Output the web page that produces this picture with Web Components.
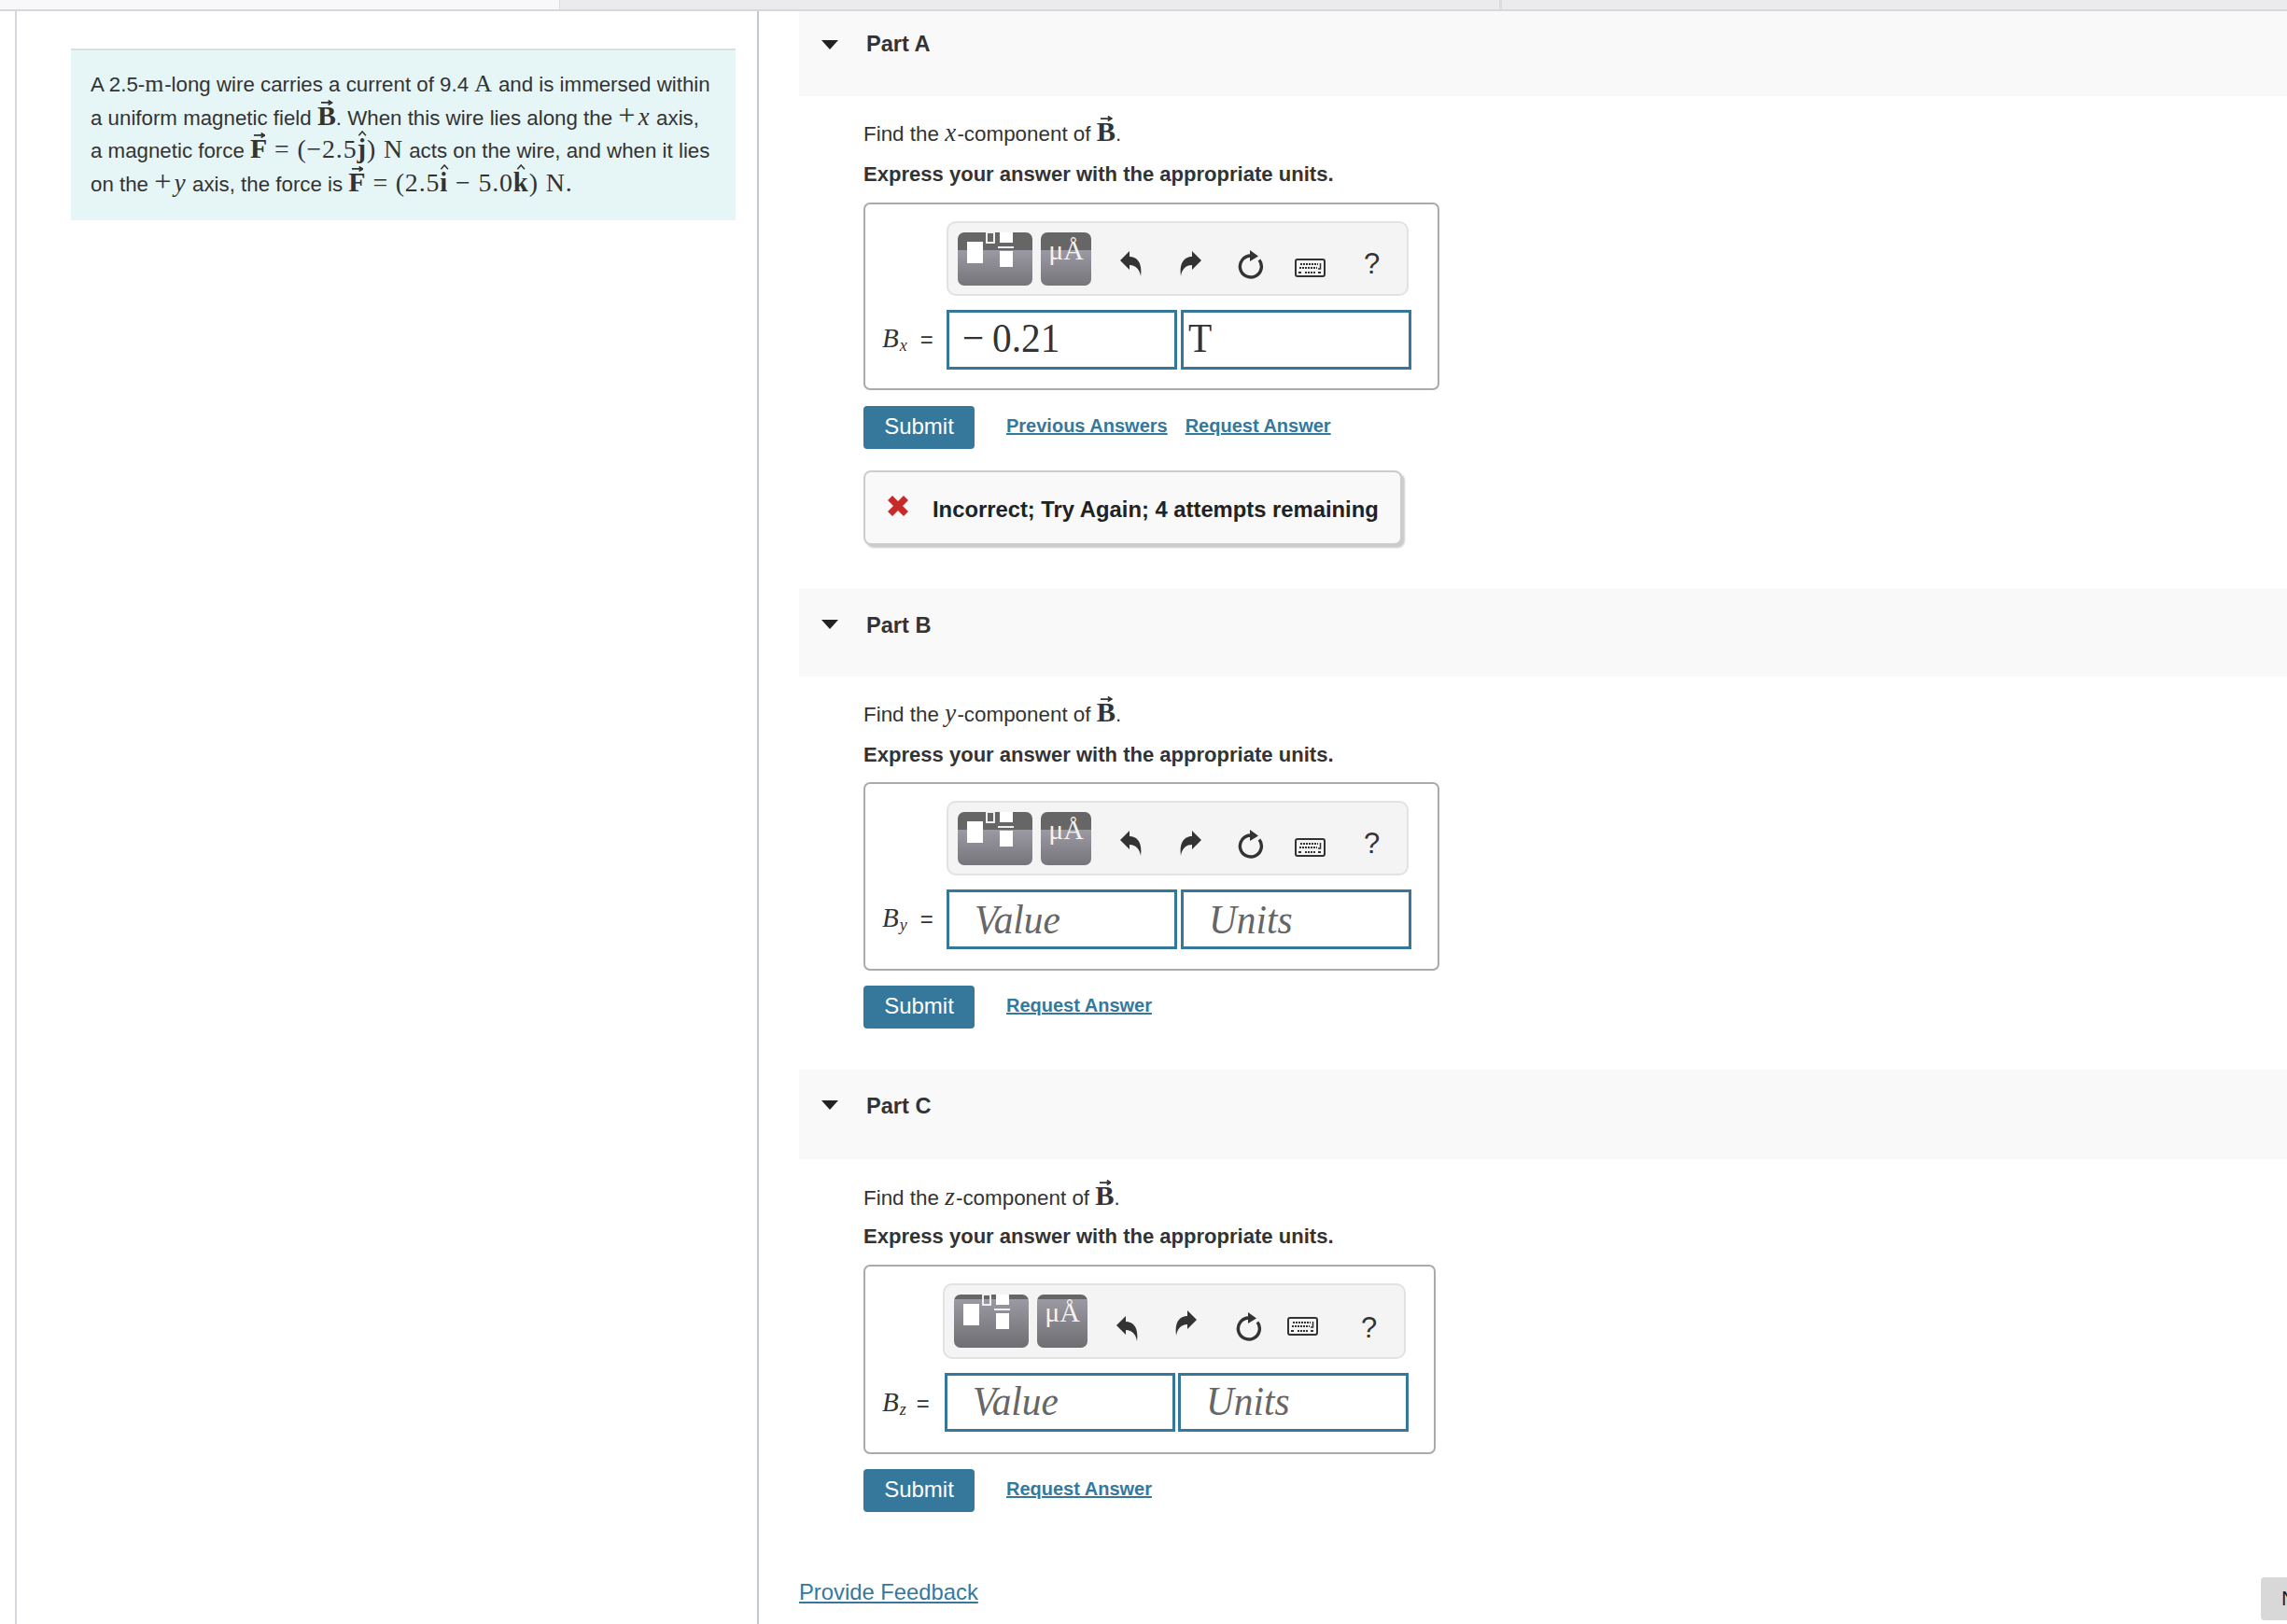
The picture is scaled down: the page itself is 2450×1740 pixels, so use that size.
<!DOCTYPE html>
<html><head><meta charset="utf-8"><title>Part A</title>
<style>
html,body{margin:0;padding:0;background:#fff;overflow:hidden}
body{width:2450px;height:1740px;position:relative;font:22.4px/1.5 "Liberation Sans",Arial,sans-serif;color:#333}
</style></head><body>
<app-tabs></app-tabs>
<work-area>
<problem-panel slot="left">A 2.5-<m-r unit>m</m-r>-long wire carries a current of 9.4 <m-r unit>A</m-r> and is immersed within<br>a uniform magnetic field <m-vec>B</m-vec>. When this wire lies along the <m-r big>+</m-r><m-i>x</m-i> axis,<br>a magnetic force <m-vec>F</m-vec><m-r> = (−2.5</m-r><m-hat>j</m-hat><m-r>) N</m-r> acts on the wire, and when it lies<br>on the <m-r big>+</m-r><m-i>y</m-i> axis, the force is <m-vec>F</m-vec><m-r> = (2.5</m-r><m-hat>i</m-hat><m-r> − 5.0</m-r><m-hat>k</m-hat><m-r>) N.</m-r></problem-panel>
<part-section slot="right" title="Part A" style="--head-h:91px;--title-top:20px;--after:47px;--find-top:22px;--box-top:15px">
  <p-find>Find the <m-i>x</m-i>-component of <m-vec big>B</m-vec>.</p-find>
  <answer-box sub="x" value="−" num="0.21" units="T" style="--box-h:201px"></answer-box>
  <submit-row prev></submit-row>
  <feedback-box>Incorrect; Try Again; 4 attempts remaining</feedback-box>
</part-section>
<part-section slot="right" title="Part B" style="--head-h:94px;--title-top:24px;--after:44px;--find-top:22px;--box-top:14px;--f-lh:60px">
  <p-find>Find the <m-i>y</m-i>-component of <m-vec big>B</m-vec>.</p-find>
  <answer-box sub="y" style="--box-h:202px"></answer-box>
  <submit-row style="--sub-top:16px"></submit-row>
</part-section>
<part-section slot="right" title="Part C" style="--head-h:96px;--title-top:24px;--after:0px;--box-top:15px;--find-lh:41px">
  <p-find>Find the <m-i>z</m-i>-component of <m-vec big>B</m-vec>.</p-find>
  <answer-box sub="z" variant="c"></answer-box>
  <submit-row style="--sub-top:16px"></submit-row>
</part-section>
<a slot="right" href="#" style="display:block;margin:69px 0 0 0;color:#36789c;font-size:23.8px;line-height:34px;width:max-content">Provide Feedback</a>
</work-area>
<next-tab>Next</next-tab>

<script>
function def(name, css, html){
  customElements.define(name, class extends HTMLElement{
    constructor(){super();const s=this.attachShadow({mode:'open'});
      s.innerHTML='<style>'+css+'</style>'+(typeof html==='function'?'':html);}
    connectedCallback(){
      if(typeof html==='function'){this.shadowRoot.innerHTML='<style>'+css+'</style>'+html(this);}
    }
  });
}
const SERIF='"Liberation Serif","Times New Roman",serif';
def('app-tabs',':host{display:flex;height:10px;border-bottom:2px solid #d8d8da;box-sizing:content-box} div{height:10px} .a{width:599px;background:#f8f8fa}.b{width:1007px;background:#ebebee;border-left:1px solid #ddd;box-sizing:border-box}.c{flex:1;background:#ebebee;border-left:3px solid #dcdcde}','<div class="a"></div><div class="b"></div><div class="c"></div>');
def('work-area',':host{display:flex;height:1728px;margin-left:16px} .l{width:793px;border-left:2px solid #d5d7de;border-right:2px solid #c3c9d3;flex:none} .r{flex:1;padding-left:43px;min-width:0}','<div class="l"><slot name="left"></slot></div><div class="r"><slot name="right"></slot></div>');
def('problem-panel',':host{display:block;margin:40px 0 0 58px;width:712px;height:184px;box-sizing:border-box;background:#e6f5f5;border-top:2px solid #dcdfe2;padding:19px 0 0 21px;line-height:35.7px;font-size:22.3px;color:#333;white-space:nowrap}','<slot></slot>');
def('m-r',':host{font-family:'+SERIF+';font-size:1.25em;line-height:0;letter-spacing:.03em} :host([big]){font-size:1.45em;letter-spacing:0;margin-right:.1em} :host([unit]){font-size:1.16em;letter-spacing:.03em}','<slot></slot>');
def('m-i',':host{font-family:'+SERIF+';font-style:italic;font-size:1.2em;line-height:0;letter-spacing:.05em}','<slot></slot>');
def('m-vec',':host{position:relative;font-family:'+SERIF+';font-weight:700;font-size:1.34em;line-height:0} :host([big]){font-size:1.36em} svg{position:absolute;left:50%;top:0;width:.45em;height:.2em;margin-left:-.22em}','<slot></slot><svg viewBox="0 0 14 6"><path d="M1 3H12M9 .5L13 3L9 5.5" fill="none" stroke="#333" stroke-width="1.8"/></svg>');
def('m-hat',':host{position:relative;font-family:'+SERIF+';font-weight:700;font-size:1.28em;line-height:0;letter-spacing:.04em} svg{position:absolute;left:50%;top:-.14em;width:.36em;height:.2em;margin-left:-.18em}','<slot></slot><svg viewBox="0 0 10 6"><path d="M1 5.5L5 1L9 5.5" fill="none" stroke="#333" stroke-width="1.6"/></svg>');
def('part-section',':host{display:block;padding-bottom:var(--after,44px)} .h{height:var(--head-h,94px);background:#f9f9f9;position:relative;box-sizing:border-box;padding:var(--title-top,23px) 0 0 72px;font-weight:700;font-size:23.6px;line-height:30px;color:#333} .t{position:absolute;left:24px;top:var(--tri-top,33px);width:0;height:0;border-left:9px solid transparent;border-right:9px solid transparent;border-top:10px solid #222} .b{padding:var(--find-top,21px) 0 0 69px} ::slotted(answer-box){margin-top:var(--box-top,16px)} :host([title="Part A"]){--tri-top:31px}',
  h=>'<div class="h"><span class="t"></span>'+h.getAttribute('title')+'</div><div class="b"><slot></slot></div>');
def('p-find',':host{display:block;font-size:22.4px;color:#333;white-space:nowrap} .f{height:36px;line-height:var(--find-lh,38px)} .x{display:block;font-weight:700;font-size:22.05px;line-height:30px;margin-top:11px}','<div class="f"><slot></slot></div><span class="x">Express your answer with the appropriate units.</span>');
def('math-toolbar',`:host{display:flex;box-sizing:border-box;height:80px;width:495px;background:#f4f4f4;border:2px solid #e2e2e2;border-radius:10px;align-items:flex-start}
.btn{margin-top:10px;height:57px;border-radius:7px;background:linear-gradient(#666 0,#666 19px,#9b99a3 19px,#76757a 100%);flex:none;position:relative;overflow:hidden}
:host([variant=c]) .btn{background:linear-gradient(#666 0,#666 5px,#9b99a3 5px,#6f6e72 100%)}
.t1{width:80px;margin-left:10px}.t2{width:54px;margin-left:9px;color:#f2f2f2;font:30px/1 ${SERIF};text-align:center}
.t2 span{display:block;margin-top:4px}
.t1 svg{position:absolute;left:0;top:0}
.i{flex:none;display:block}
.q{font:31px/28px "Liberation Sans",sans-serif;color:#333;flex:none}
.u{margin:30px 0 0 31px}.v{margin:30px 0 0 41px}.w{margin:29px 0 0 38px}.k{margin:38px 0 0 32px}.q{margin:30px 0 0 41px}
:host([variant=c]){width:496px;height:81px}
:host([variant=c]) .u{margin:33px 0 0 31px}:host([variant=c]) .v{margin:27px 0 0 40px}:host([variant=c]) .w{margin:29px 0 0 41px}:host([variant=c]) .k{margin:34px 0 0 26px}:host([variant=c]) .q{margin:32px 0 0 46px}`,
`<div class="btn t1"><svg width="80" height="57"><rect x="10" y="10" width="17" height="23" fill="#fff"/><rect x="31" y="0" width="8" height="11" fill="none" stroke="#eee" stroke-width="2"/><rect x="45" y="0" width="14" height="11" fill="#fff"/><rect x="43" y="15" width="17" height="2" fill="#eee"/><rect x="45" y="20" width="14" height="17" fill="#fff"/></svg></div>
<div class="btn t2"><span>μÅ</span></div>
<svg class="i u" width="23" height="27" viewBox="0 0 23 27"><path d="M0 10L10 0V6C18 6 24 12 22 27C21 20 17 15 10 15V20Z" fill="#333"/></svg>
<svg class="i v" width="23" height="27" viewBox="0 0 23 27"><path d="M23 10L13 0V6C5 6 -1 12 1 27C2 20 6 15 13 15V20Z" fill="#333"/></svg>
<svg class="i w" width="30" height="31" viewBox="0 0 30 31"><path d="M24 10.5A11.5 11.5 0 1 1 15 6" fill="none" stroke="#333" stroke-width="3.4"/><path d="M14 0L23 6.5L14 12Z" fill="#333"/></svg>
<svg class="i k" width="33" height="20" viewBox="0 0 33 20"><rect x="1" y="1" width="31" height="18" rx="2" fill="#f4f4f4" stroke="#333" stroke-width="2"/><path d="M6 6H25M5 10H24M11 15H23" stroke="#333" stroke-width="2" stroke-dasharray="2 1" fill="none"/><path d="M27.5 5V11H25" fill="none" stroke="#333" stroke-width="1.5"/><path d="M4 15H7M25 15H28" stroke="#333" stroke-width="2"/></svg>
<span class="q">?</span>`);
def('answer-box',`:host{display:block;box-sizing:border-box;width:617px;height:var(--box-h,200px);border:2px solid #aaa;border-radius:7px;padding-top:18px;background:#fff}
:host([variant=c]){width:613px;height:203px}
.tb{margin-left:87px}
:host([variant=c]) .tb{margin-left:83px}
.row{display:flex;align-items:center;margin-top:15px;height:64px}
:host([variant=c]) .row{height:63px}
.lab{width:87px;flex:none;box-sizing:border-box;padding:0 0 4px 18px;display:flex;align-items:baseline;white-space:nowrap}
:host([variant=c]) .lab{width:85px;padding-bottom:0}
.B{font:italic 29px/1 ${SERIF};color:#333}
sub{font:italic 18px/1 ${SERIF};vertical-align:-5px;margin:0 14px 0 1px;position:relative;top:4px}
.eq{font:24px/1 "Liberation Sans",sans-serif}
:host([variant=c]) sub{margin-right:11px}
.f{box-sizing:border-box;width:247px;height:100%;border:3px solid #36789c;font:44px/var(--f-lh,56px) ${SERIF};color:#333;flex:none;white-space:pre;background:#fff;display:flex}
.f span{display:block;transform:scaleX(.94);transform-origin:0 50%}
.f.val{padding-left:14px}.f.unit{margin-left:4px;padding-left:5px}
:host([variant=c]) .f.unit{margin-left:3px}
.f.ph{color:#666;font-style:italic;padding-left:27px}
.n{margin-left:7px}
`,h=>{const v=h.getAttribute('value'),u=h.getAttribute('units'),n=h.getAttribute('num');
return `<math-toolbar class="tb" ${h.getAttribute('variant')?'variant="c"':''}></math-toolbar>
<div class="row"><div class="lab"><span class="B">B</span><sub>${h.getAttribute('sub')}</sub><span class="eq">=</span></div>
<div class="f val ${v?'':'ph'}">${v?`<span>${v}</span><span class="n">${n}</span>`:'<span>Value</span>'}</div><div class="f unit ${u?'':'ph'}"><span>${u||'Units'}</span></div></div>`});
def('submit-row',`:host{display:flex;align-items:flex-start;margin-top:var(--sub-top,17px);height:46px}
b{display:block;width:119px;height:46px;background:#36789c;color:#fff;border-radius:4px;font:400 24px/44px "Liberation Sans",sans-serif;text-align:center;flex:none}
a{color:#36789c;font:700 20px/42px "Liberation Sans",sans-serif;text-decoration:underline;white-space:nowrap}
a.p{margin-left:34px}a.q{margin-left:19px}a.first{margin-left:34px}`,
h=>`<b>Submit</b>`+(h.hasAttribute('prev')?'<a class="p" href="#">Previous Answers</a><a class="q" href="#">Request Answer</a>':'<a class="first" href="#">Request Answer</a>'));
def('feedback-box',`:host{display:flex;align-items:center;box-sizing:border-box;width:577px;height:80px;margin-top:23px;background:#f9f9f9;border:2px solid #ccc;border-radius:8px;box-shadow:3px 3px 2px #ccc;padding-left:23px;font:700 23.8px/1 "Liberation Sans",sans-serif;color:#222;white-space:nowrap}
svg{flex:none;margin-right:25px;margin-top:-4px} span{padding-top:3px}`,'<svg width="24" height="24" viewBox="0 0 24 24"><path d="M6 1L12 7L18 1L23 6L17 12L23 18L18 23L12 17L6 23L1 18L7 12L1 6Z" fill="#c82a2a"/></svg><span><slot></slot></span>');
def('next-tab',':host{position:absolute;left:2422px;top:1690px;width:28px;height:46px;overflow:hidden;background:#d8d8d8;border-radius:4px 0 0 4px;padding-left:22px;box-sizing:border-box;font:22px/46px "Liberation Sans",sans-serif;color:#222;white-space:nowrap}','<slot></slot>');
</script>
</body></html>
